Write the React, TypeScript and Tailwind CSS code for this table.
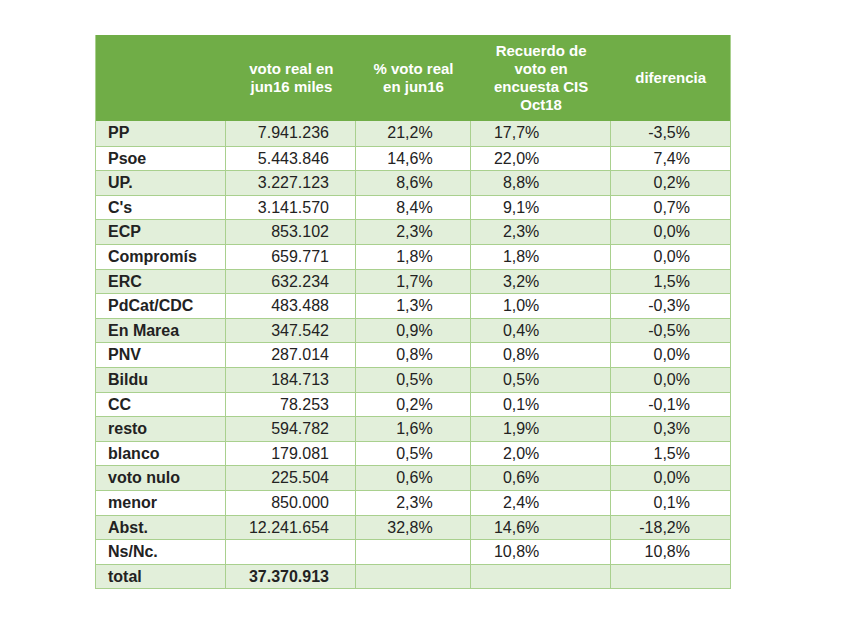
import React from "react";

const rows: [string, string, string, string, string][] = [
  ["PP", "7.941.236", "21,2%", "17,7%", "-3,5%"],
  ["Psoe", "5.443.846", "14,6%", "22,0%", "7,4%"],
  ["UP.", "3.227.123", "8,6%", "8,8%", "0,2%"],
  ["C's", "3.141.570", "8,4%", "9,1%", "0,7%"],
  ["ECP", "853.102", "2,3%", "2,3%", "0,0%"],
  ["Compromís", "659.771", "1,8%", "1,8%", "0,0%"],
  ["ERC", "632.234", "1,7%", "3,2%", "1,5%"],
  ["PdCat/CDC", "483.488", "1,3%", "1,0%", "-0,3%"],
  ["En Marea", "347.542", "0,9%", "0,4%", "-0,5%"],
  ["PNV", "287.014", "0,8%", "0,8%", "0,0%"],
  ["Bildu", "184.713", "0,5%", "0,5%", "0,0%"],
  ["CC", "78.253", "0,2%", "0,1%", "-0,1%"],
  ["resto", "594.782", "1,6%", "1,9%", "0,3%"],
  ["blanco", "179.081", "0,5%", "2,0%", "1,5%"],
  ["voto nulo", "225.504", "0,6%", "0,6%", "0,0%"],
  ["menor", "850.000", "2,3%", "2,4%", "0,1%"],
  ["Abst.", "12.241.654", "32,8%", "14,6%", "-18,2%"],
  ["Ns/Nc.", "", "", "10,8%", "10,8%"],
  ["total", "37.370.913", "", "", ""],
];

export default function App() {
  return (
    <div
      className="w-[854px] h-[640px] bg-white pt-[35px] pl-[95px]"
      style={{ fontFamily: '"Liberation Sans", Arial, sans-serif' }}
    >
      <div className="w-[636px] border-l border-r border-b border-[#a9d08e]">
        <div className="flex h-[86px] bg-[#70ad47] text-white font-bold text-[15px] leading-[18px]">
          <div className="w-[131px]" />
          <div className="w-[130px] flex items-center justify-center text-center">
            voto real en<br />jun16 miles
          </div>
          <div className="w-[115px] flex items-center justify-center text-center pr-[0px]">
            % voto real<br />en jun16
          </div>
          <div className="w-[141px] flex items-center justify-center text-center">
            Recuerdo de<br />voto en<br />encuesta CIS<br />Oct18
          </div>
          <div className="w-[119px] flex items-center justify-center text-center">
            diferencia
          </div>
        </div>
        {rows.map((r, i) => {
          const bg = i % 2 === 0 ? "bg-[#e2efda]" : "bg-white";
          const last = i === rows.length - 1;
          return (
            <div
              key={i}
              className={`flex h-[24.6px] text-[16px] leading-[24px] text-[#222] ${bg} ${i > 0 ? "border-t border-[#a9d08e]" : ""}`}
            >
              <div className="w-[131px] pl-[12px] font-bold border-r border-[#a9d08e]">{r[0]}</div>
              <div className={`w-[130px] pr-[26px] text-right border-r border-[#a9d08e] ${last ? "font-bold" : ""}`}>{r[1]}</div>
              <div className="w-[115px] pr-[37px] text-right border-r border-[#a9d08e]">{r[2]}</div>
              <div className="w-[141px] pr-[71px] text-right border-r border-[#a9d08e]">{r[3]}</div>
              <div className="w-[119px] pr-[40px] text-right">{r[4]}</div>
            </div>
          );
        })}
      </div>
    </div>
  );
}
